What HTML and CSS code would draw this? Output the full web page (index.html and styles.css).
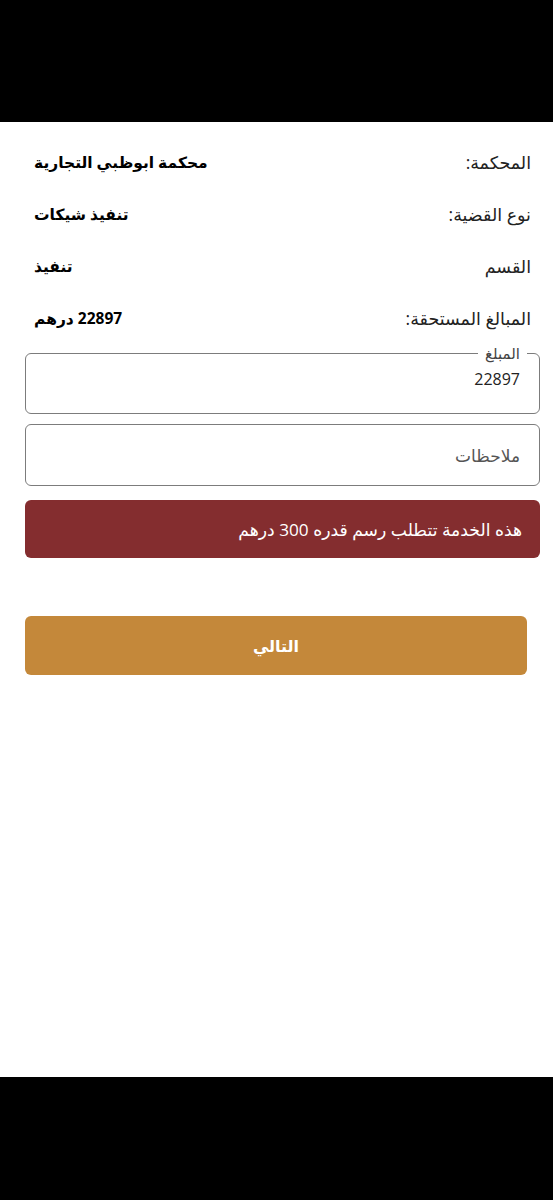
FILE: index.html
```html
<!DOCTYPE html>
<html lang="ar" dir="rtl">
<head>
<meta charset="utf-8">
<title>تفاصيل الطلب</title>
<link rel="stylesheet" href="styles.css">
</head>
<body>
<div class="top-bar"></div>
<main class="screen">
  <div class="info">
    <div class="row"><span class="label">المحكمة:</span><span class="value">محكمة ابوظبي التجارية</span></div>
    <div class="row"><span class="label">نوع القضية:</span><span class="value">تنفيذ شيكات</span></div>
    <div class="row"><span class="label">القسم</span><span class="value">تنفيذ</span></div>
    <div class="row"><span class="label">المبالغ المستحقة:</span><span class="value">22897 درهم</span></div>
  </div>
  <div class="field amount">
    <span class="float-label">المبلغ</span>
    <span class="field-text">22897</span>
  </div>
  <div class="field notes">
    <span class="placeholder">ملاحظات</span>
  </div>
  <div class="notice">هذه الخدمة تتطلب رسم قدره 300 درهم</div>
  <button class="next">التالي</button>
</main>
<div class="bottom-bar"></div>
</body>
</html>
```
FILE: styles.css
```css
html, body {
  margin: 0;
  padding: 0;
  background: #000;
}
body {
  width: 553px;
  font-family: "Open Sans", "DejaVu Sans", sans-serif;
  color: #111;
}
.top-bar {
  height: 122px;
  background: #000;
}
.bottom-bar {
  height: 123px;
  background: #000;
}
.screen {
  height: 955px;
  background: #fff;
  box-sizing: border-box;
  padding: 14px 13px 0 25px;
  display: flex;
  flex-direction: column;
}
.info {
  display: flex;
  flex-direction: column;
  padding-right: 9px;
  padding-left: 9px;
}
.row {
  height: 52px;
  display: flex;
  align-items: center;
  justify-content: space-between;
}
.label {
  font-size: 17.5px;
  color: #222;
}
.value {
  font-size: 15.5px;
  font-weight: bold;
  color: #000;
}
.field {
  position: relative;
  box-sizing: border-box;
  border: 1px solid #7c7c7c;
  border-radius: 6px;
  display: flex;
  align-items: center;
  padding-right: 19px;
}
.amount {
  margin-top: 9px;
  height: 61px;
  align-items: flex-start;
  padding-top: 14px;
}
.float-label {
  position: absolute;
  top: -10px;
  right: 12px;
  background: #fff;
  padding: 0 7px;
  font-size: 15px;
  line-height: 18px;
  color: #444;
}
.field-text {
  font-size: 16px;
  color: #222;
}
.notes {
  margin-top: 10px;
  height: 62px;
}
.placeholder {
  font-size: 17px;
  color: #555;
}
.notice {
  margin-top: 14px;
  height: 58px;
  background: #842d2f;
  border-radius: 6px;
  color: #fff;
  font-size: 17.2px;
  display: flex;
  align-items: center;
  padding-right: 18px;
}
.next {
  margin-top: 58px;
  margin-right: 13px;
  height: 59px;
  background: #c4883a;
  border: none;
  border-radius: 6px;
  color: #fff;
  font-family: inherit;
  font-size: 16px;
  font-weight: bold;
}
```
